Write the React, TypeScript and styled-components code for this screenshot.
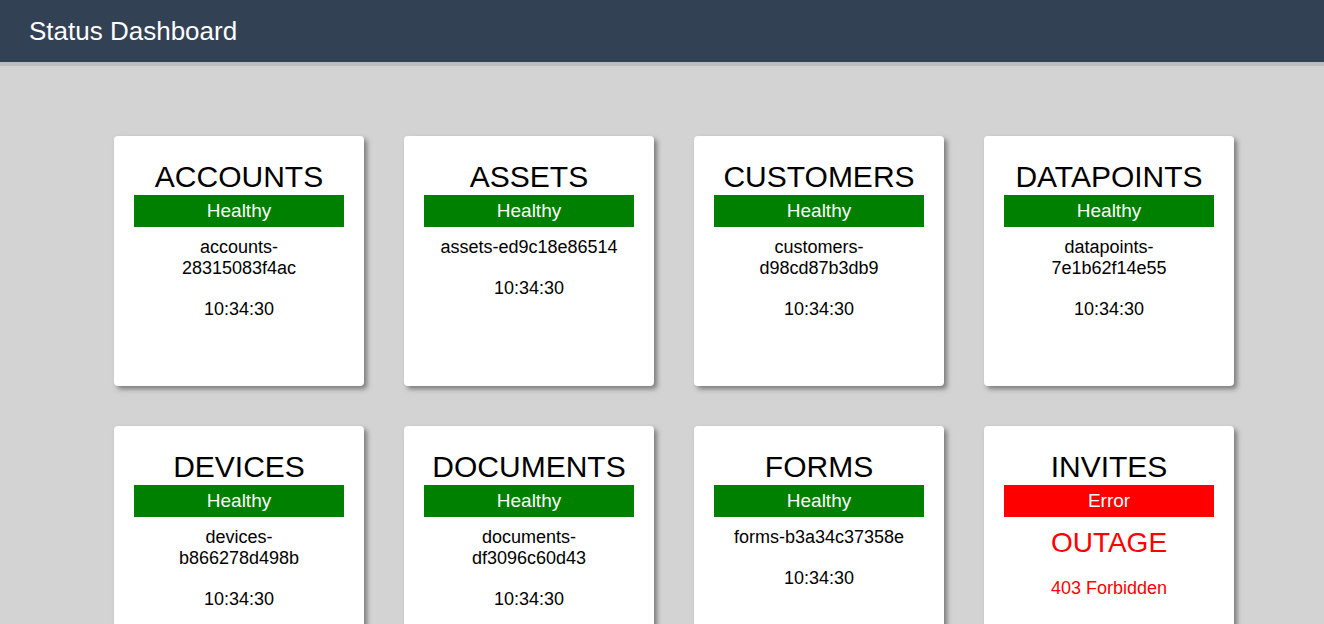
import React from "react";
import styled, { createGlobalStyle } from "styled-components";

const GlobalStyle = createGlobalStyle`
  html, body {
    margin: 0;
    padding: 0;
    background: #d3d3d3;
    font-family: "Liberation Sans", Arial, sans-serif;
  }
`;

const Header = styled.header`
  height: 62px;
  background: #334155;
  border-bottom: 4px solid #bdbdbd;
  display: flex;
  align-items: center;
  padding-left: 29px;
`;

const Title = styled.h1`
  margin: 0;
  color: #ffffff;
  font-size: 26px;
  font-weight: 400;
`;

const Grid = styled.main`
  display: grid;
  grid-template-columns: repeat(4, 250px);
  gap: 40px;
  padding: 70px 0 40px 114px;
`;

const Card = styled.section`
  width: 250px;
  height: 250px;
  box-sizing: border-box;
  background: #ffffff;
  border-radius: 4px;
  box-shadow: 3px 3px 5px #7a7a7a;
  padding: 24px 20px 0;
  text-align: center;
`;

const Name = styled.h2`
  margin: 0 0 1px;
  font-size: 30px;
  line-height: 34px;
  font-weight: 400;
  color: #000;
`;

const StatusBar = styled.div<{ $ok: boolean }>`
  height: 32px;
  line-height: 32px;
  background: ${(p) => (p.$ok ? "#008000" : "#ff0000")};
  color: #fff;
  font-size: 19px;
`;

const Body = styled.div`
  padding-top: 10px;
  display: flex;
  flex-direction: column;
  gap: 20px;
`;

const Line = styled.div<{ $error?: boolean; $big?: boolean }>`
  font-size: ${(p) => (p.$big ? "28px" : "18px")};
  line-height: ${(p) => (p.$big ? "31px" : "21px")};
  color: ${(p) => (p.$error ? "#ff0000" : "#000")};
`;

type Service = {
  name: string;
  ok: boolean;
  host?: string;
  time?: string;
  error?: string;
};

const services: Service[] = [
  { name: "ACCOUNTS", ok: true, host: "accounts-\n28315083f4ac", time: "10:34:30" },
  { name: "ASSETS", ok: true, host: "assets-ed9c18e86514", time: "10:34:30" },
  { name: "CUSTOMERS", ok: true, host: "customers-\nd98cd87b3db9", time: "10:34:30" },
  { name: "DATAPOINTS", ok: true, host: "datapoints-\n7e1b62f14e55", time: "10:34:30" },
  { name: "DEVICES", ok: true, host: "devices-\nb866278d498b", time: "10:34:30" },
  { name: "DOCUMENTS", ok: true, host: "documents-\ndf3096c60d43", time: "10:34:30" },
  { name: "FORMS", ok: true, host: "forms-b3a34c37358e", time: "10:34:30" },
  { name: "INVITES", ok: false, error: "403 Forbidden" },
];

const HostText = ({ text }: { text: string }) => (
  <>
    {text.split("\n").map((t, i) => (
      <React.Fragment key={i}>
        {i > 0 && <br />}
        {t}
      </React.Fragment>
    ))}
  </>
);

export default function App() {
  return (
    <>
      <GlobalStyle />
      <Header>
        <Title>Status Dashboard</Title>
      </Header>
      <Grid>
        {services.map((s) => (
          <Card key={s.name}>
            <Name>{s.name}</Name>
            <StatusBar $ok={s.ok}>{s.ok ? "Healthy" : "Error"}</StatusBar>
            <Body>
              {s.ok ? (
                <>
                  <Line>
                    <HostText text={s.host!} />
                  </Line>
                  <Line>{s.time}</Line>
                </>
              ) : (
                <>
                  <Line $error $big>
                    OUTAGE
                  </Line>
                  <Line $error>{s.error}</Line>
                </>
              )}
            </Body>
          </Card>
        ))}
      </Grid>
    </>
  );
}
